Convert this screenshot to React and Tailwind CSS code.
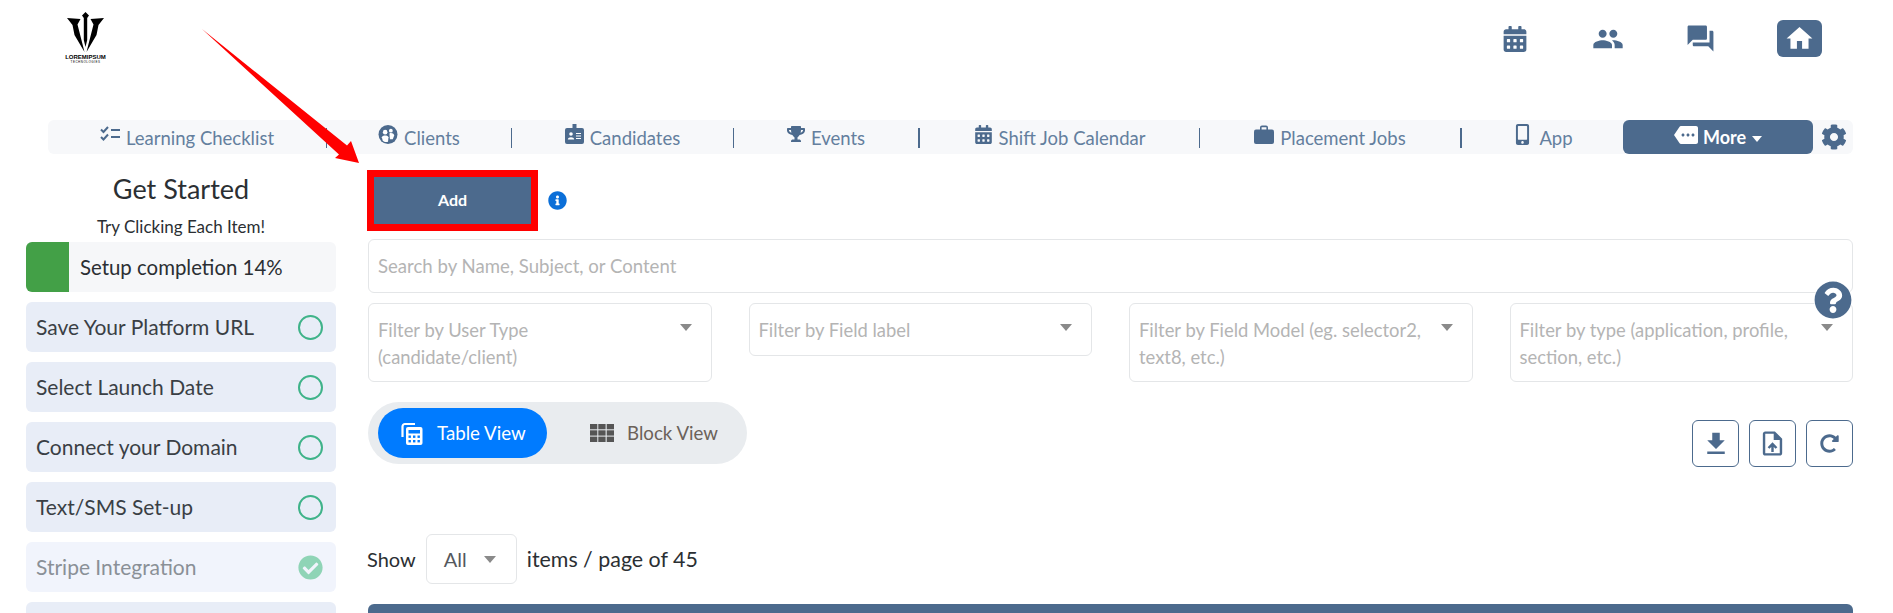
import React from "react";
import { FaCalendarAlt, FaTrophy, FaMobileAlt, FaCog, FaInfoCircle, FaCheckCircle, FaQuestionCircle, FaRedoAlt } from "react-icons/fa";
import { MdPeople, MdQuestionAnswer, MdHome, MdMore, MdFileDownload, MdOutlineUploadFile } from "react-icons/md";

const Logo = () => (
  <div className="flex flex-col items-center w-[43px] text-black">
    <svg width="43" height="42" viewBox="0 0 43 42" fill="#000">
      <path d="M21.5 1 L25 4.5 L23.2 7 L23.2 29 L21.5 36 L19.8 29 L19.8 7 L18 4.5 Z" />
      <path d="M3 7 L16.5 8 L13.5 13.5 L20.5 41 L10.5 24 L8.5 14 Z" />
      <path d="M40 7 L26.5 8 L29.5 13.5 L22.5 41 L32.5 24 L34.5 14 Z" />
    </svg>
    <div className="mt-[1px] text-[6px] leading-[6px] font-bold whitespace-nowrap font-['Liberation_Sans',sans-serif]">LOREMIPSUM</div>
    <div className="text-[3px] leading-[4px] tracking-[0.5px] whitespace-nowrap font-['Liberation_Sans',sans-serif]">TECHNOLOGIES</div>
  </div>
);

const ChecklistIcon = () => (
  <svg width="20" height="16" viewBox="0 0 20 16" fill="none" stroke="#4c6a8d" strokeWidth="2">
    <path d="M1 3.5 L3.5 6 L8 1" />
    <path d="M1 11 L3.5 13.5 L8 8.5" />
    <path d="M11 4 H20" />
    <path d="M11 11 H20" />
  </svg>
);

const ClientsIcon = () => (
  <svg width="20" height="19" viewBox="0 0 20 20">
    <circle cx="10" cy="10" r="10" fill="#4c6a8d" />
    <circle cx="7" cy="7.5" r="2.4" fill="#fff" />
    <circle cx="13" cy="6" r="2" fill="#fff" />
    <path d="M3.5 13 C4 10.5 10 10.5 10.5 13 L10 17.5 C8 18.5 6 18 4.5 16.5 Z" fill="#fff" />
    <path d="M11.5 9 C13 8 16 8.5 16.5 11 L15 15 L12 15 Z" fill="#fff" />
  </svg>
);

const BadgeIcon = () => (
  <svg width="19" height="20" viewBox="0 0 19 20">
    <path d="M7.5 0 H11.5 V4 H17 a2 2 0 0 1 2 2 V18 a2 2 0 0 1 -2 2 H2 a2 2 0 0 1 -2 -2 V6 a2 2 0 0 1 2 -2 H7.5 Z" fill="#4c6a8d" />
    <circle cx="6" cy="10" r="1.8" fill="#fff" />
    <path d="M2.8 15.5 C3 12.5 9 12.5 9.2 15.5 Z" fill="#fff" />
    <path d="M11 9.5 H16 M11 12 H16 M11 14.5 H16" stroke="#fff" strokeWidth="1.2" />
  </svg>
);

const CaseIcon = () => (
  <svg width="20" height="19" viewBox="0 0 20 19">
    <path d="M6 5 V2.5 A2 2 0 0 1 8 0.5 H12 A2 2 0 0 1 14 2.5 V5 H12.4 V2.2 H7.6 V5 Z" fill="#4c6a8d" />
    <rect x="0" y="4.5" width="20" height="14.5" rx="2" fill="#4c6a8d" />
  </svg>
);

const TableIcon = () => (
  <svg width="22" height="23" viewBox="0 0 22 23">
    <path d="M14 2 H4 a2.5 2.5 0 0 0 -2.5 2.5 V15" fill="none" stroke="#fff" strokeWidth="2.2" />
    <rect x="5" y="5" width="16.5" height="18" rx="2" fill="#fff" />
    <rect x="7.5" y="8" width="11.5" height="3.5" fill="#007bff" />
    <g fill="#007bff">
      <rect x="7.5" y="13.5" width="2.4" height="2.4" />
      <rect x="12" y="13.5" width="2.4" height="2.4" />
      <rect x="16.5" y="13.5" width="2.4" height="2.4" />
      <rect x="7.5" y="18" width="2.4" height="2.4" />
      <rect x="12" y="18" width="2.4" height="2.4" />
      <rect x="16.5" y="18" width="2.4" height="2.4" />
    </g>
  </svg>
);

const BlockIcon = () => (
  <svg width="24" height="18" viewBox="0 0 24 18" fill="#555">
    <rect x="0" y="0" width="7.3" height="5.3" />
    <rect x="8.3" y="0" width="7.3" height="5.3" />
    <rect x="16.7" y="0" width="7.3" height="5.3" />
    <rect x="0" y="6.3" width="7.3" height="5.3" />
    <rect x="8.3" y="6.3" width="7.3" height="5.3" />
    <rect x="16.7" y="6.3" width="7.3" height="5.3" />
    <rect x="0" y="12.6" width="7.3" height="5.4" />
    <rect x="8.3" y="12.6" width="7.3" height="5.4" />
    <rect x="16.7" y="12.6" width="7.3" height="5.4" />
  </svg>
);

const Arrow = () => (
  <svg className="absolute left-0 top-0 pointer-events-none" width="400" height="180" viewBox="0 0 400 180">
    <polygon points="202,29 347,145.5 351,141 359,163 335,158 339,154.5" fill="#ff0000" />
  </svg>
);

const Caret = ({ className }) => (
  <div className={`w-0 h-0 flex-none border-x-[6px] border-x-transparent border-t-[7px] border-t-[#8a8a8a] ${className || ""}`} />
);

const NavCell = ({ w, icon, label }) => (
  <div className={`${w} flex-none flex items-center justify-center gap-[6px] h-full`}>
    <div className="flex items-center justify-center mb-[6px]">{icon}</div>
    <span className="text-[18.5px] leading-[34px] text-[#647f9e] pt-[2px] whitespace-nowrap">{label}</span>
  </div>
);

const Sep = ({ w }) => <div className={`${w} h-[20px] flex-none bg-[#4c6a8d] mt-[1px]`} />;

const Step = ({ label, done }) => (
  <div className={`mt-[10px] h-[50px] flex-none flex items-center justify-between pl-[10px] pr-[13px] rounded-md ${done ? "bg-[#f1f4fc]" : "bg-[#e8edf7]"}`}>
    <span className={`text-[21px] leading-[28px] mb-[1px] whitespace-nowrap ${done ? "text-[#8a9097]" : "text-[#3a3f45]"}`}>{label}</span>
    {done ? (
      <FaCheckCircle size={25} color="#8fd4b6" />
    ) : (
      <div className="w-[25px] h-[25px] rounded-full border-[2.5px] border-[#3fb389]" />
    )}
  </div>
);

const Filter = ({ children }) => (
  <div className="border border-[#e4e6e8] rounded-md flex justify-between items-start pl-[9px] pr-[19px] pt-[13px] pb-[11px]">
    <span className="text-[18.4px] leading-[26.5px] text-[#b4b4b4] whitespace-nowrap">{children}</span>
    <Caret className="mt-[7px]" />
  </div>
);

const IconBtn = ({ children }) => (
  <div className="w-[47px] h-[47px] border border-[#4c6a8d] rounded-md flex items-center justify-center text-[#4c6a8d]">{children}</div>
);

export default function App() {
  return (
    <div className="relative w-full h-[613px] overflow-hidden bg-white font-['Lato',sans-serif]">
      <header className="h-[120px] flex justify-between items-start pl-[64px] pr-[71px]">
        <div className="pt-[11px]"><Logo /></div>
        <div className="flex items-center h-[37px] mt-[20px] text-[#4c6a8d]">
          <FaCalendarAlt size={26} />
          <MdPeople size={32} className="ml-[64px]" />
          <MdQuestionAnswer size={31} className="ml-[61px]" />
          <div className="ml-[61px] w-[45px] h-[37px] rounded-md bg-[#4c6a8d] flex items-center justify-center text-white">
            <MdHome size={31} />
          </div>
        </div>
      </header>

      <nav className="ml-[48px] mr-[40px] h-[34px] flex items-center bg-[#f7f8fa] rounded-md">
        <NavCell w="w-[278px]" icon={<ChecklistIcon />} label="Learning Checklist" />
        <Sep w="w-[1px]" />
        <NavCell w="w-[184px]" icon={<ClientsIcon />} label="Clients" />
        <Sep w="w-[1px]" />
        <NavCell w="w-[221px]" icon={<BadgeIcon />} label="Candidates" />
        <Sep w="w-[1px]" />
        <NavCell w="w-[184px]" icon={<FaTrophy size={18} color="#4c6a8d" />} label="Events" />
        <Sep w="w-[2px]" />
        <NavCell w="w-[279px]" icon={<FaCalendarAlt size={19} color="#4c6a8d" />} label="Shift Job Calendar" />
        <Sep w="w-[1px]" />
        <NavCell w="w-[260px]" icon={<CaseIcon />} label="Placement Jobs" />
        <Sep w="w-[2px]" />
        <NavCell w="w-[161px]" icon={<FaMobileAlt size={21} color="#4c6a8d" />} label="App" />
        <div className="w-[190px] h-[34px] flex-none rounded-md bg-[#4c6a8d] flex items-center justify-center text-white">
          <MdMore size={24} className="mb-[5px]" />
          <span className="ml-[5px] text-[18px] font-bold leading-none">More</span>
          <Caret className="ml-[6px] mt-[4px] !border-t-white !border-x-[5.5px] !border-t-[6px]" />
        </div>
        <FaCog size={26} color="#4c6a8d" className="ml-[8px]" />
      </nav>

      <main className="flex items-start pl-[26px] pr-[40px]">
        <aside className="w-[310px] flex-none flex flex-col">
          <h2 className="mt-[19px] text-center text-[27px] leading-[32px] text-[#2b2f33] font-normal">Get Started</h2>
          <p className="mt-[12px] text-center text-[17px] leading-[20px] text-[#2b2f33]">Try Clicking Each Item!</p>
          <div className="mt-[5px] h-[50px] flex items-center rounded-md bg-[#f6f7f9] overflow-hidden">
            <div className="w-[43px] h-full bg-[#43a047]" />
            <span className="ml-[11px] text-[20.4px] text-[#2b2f33] whitespace-nowrap">Setup completion 14%</span>
          </div>
          <Step label="Save Your Platform URL" />
          <Step label="Select Launch Date" />
          <Step label="Connect your Domain" />
          <Step label="Text/SMS Set-up" />
          <Step label="Stripe Integration" done />
          <Step label="" />
        </aside>

        <section className="ml-[32px] flex-1 min-w-0">
          <div className="mt-[16px] flex items-center">
            <div className="w-[171px] h-[61px] border-[7px] border-[#ff0000] bg-[#4c6a8d] flex items-center justify-center text-white text-[16px] font-bold -ml-[1px] pb-[1px]">Add</div>
            <FaInfoCircle size={19} color="#0b6fd8" className="ml-[10px]" />
          </div>

          <div className="mt-[8px] h-[54px] border border-[#e4e6e8] rounded-md flex items-center pl-[9px] pt-[1px] text-[18.6px] text-[#b4b4b4]">Search by Name, Subject, or Content</div>

          <div className="mt-[10px] grid grid-cols-4 gap-x-[37px] items-start">
            <Filter>Filter by User Type<br />(candidate/client)</Filter>
            <Filter>Filter by Field label</Filter>
            <Filter>Filter by Field Model (eg. selector2,<br />text8, etc.)</Filter>
            <Filter>Filter by type (application, profile,<br />section, etc.)</Filter>
          </div>

          <div className="mt-[20px] flex justify-between items-start">
            <div className="w-[379px] h-[62px] rounded-full bg-[#e9ecef] flex items-center pl-[10px]">
              <div className="w-[169px] h-[50px] rounded-full bg-[#007bff] flex items-center pl-[23px] gap-[14px] text-white text-[18.7px]">
                <TableIcon />
                <span>Table View</span>
              </div>
              <div className="ml-[43px] flex items-center gap-[13px] text-[18.7px] text-[#6b625a]">
                <BlockIcon />
                <span>Block View</span>
              </div>
            </div>
            <div className="mt-[18px] flex gap-[10px]">
              <IconBtn><MdFileDownload size={30} /></IconBtn>
              <IconBtn><MdOutlineUploadFile size={29} /></IconBtn>
              <IconBtn><FaRedoAlt size={19} /></IconBtn>
            </div>
          </div>

          <div className="mt-[67px] flex items-center text-[20px] text-[#2b2f33]">
            <span className="-ml-[1px]">Show</span>
            <div className="ml-[10px] w-[91px] h-[50px] border border-[#e4e6e8] rounded-md flex items-center pl-[17px] text-[#55595e]">
              <span>All</span>
              <Caret className="ml-[17px]" />
            </div>
            <span className="ml-[10px] text-[21.4px]">items / page of 45</span>
          </div>

          <div className="mt-[20px] h-[40px] rounded-t-md bg-[#4c6a8d]" />
        </section>
      </main>

      <Arrow />
      <div className="absolute left-[1814px] top-[281px] w-[38px] h-[38px] rounded-full bg-white flex items-center justify-center">
        <FaQuestionCircle size={38} color="#4c6a8d" />
      </div>
    </div>
  );
}
